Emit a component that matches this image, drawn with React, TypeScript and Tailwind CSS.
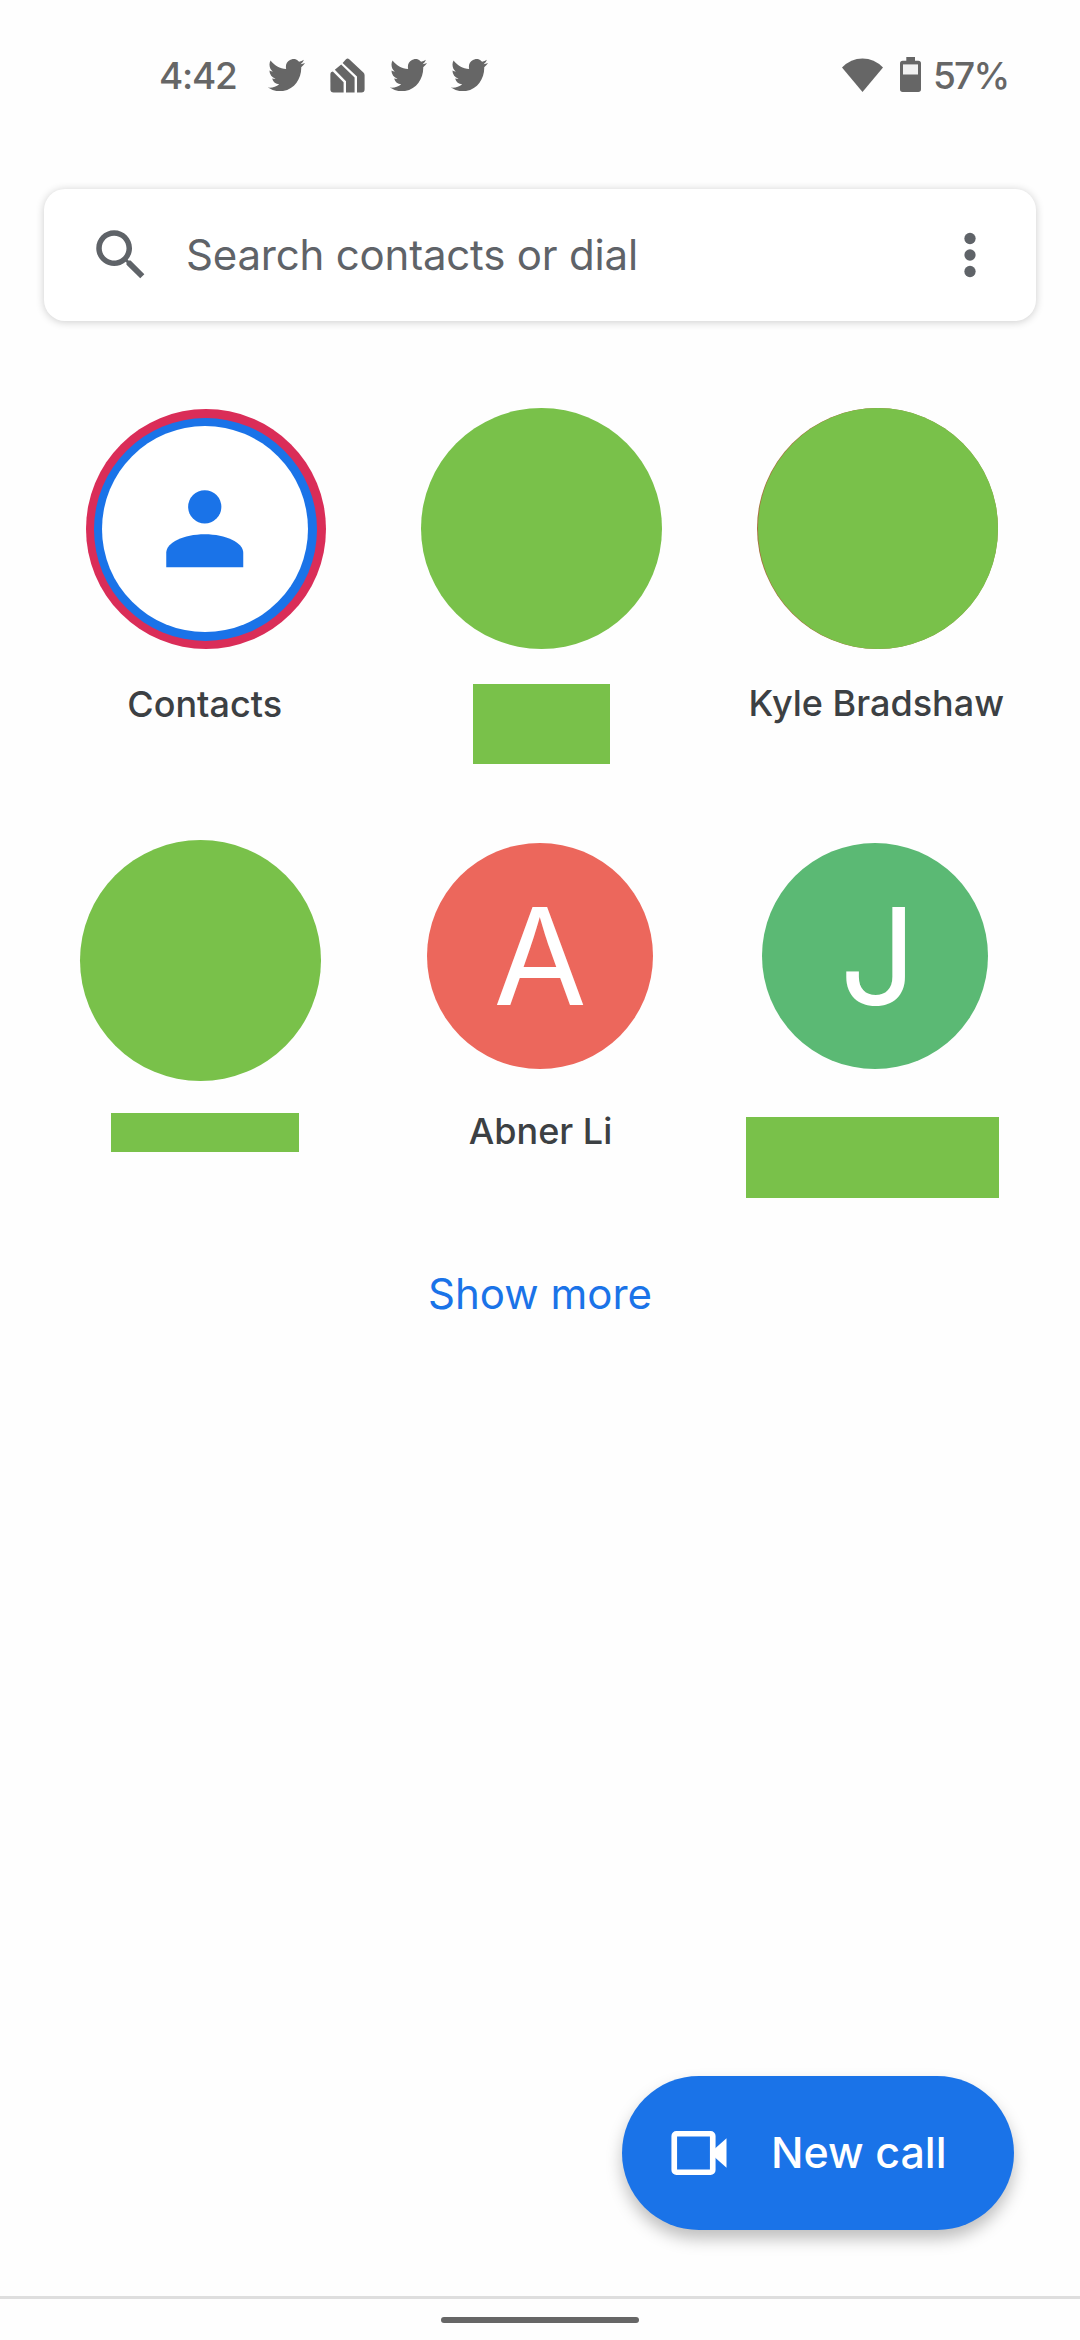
import { ReactNode } from 'react';

interface Contact {
    key: string;
    avatar: ReactNode;
    label: ReactNode;
}

const TwitterIcon = ({ className }: { className?: string }) => (
    <svg viewBox="0 2.2 24 19.4" preserveAspectRatio="none" fill="currentColor" className={`h-8 w-[37px] ${className ?? ''}`}>
        <path d="M23.953 4.57a10 10 0 01-2.825.775 4.958 4.958 0 002.163-2.723c-.951.555-2.005.959-3.127 1.184a4.92 4.92 0 00-8.384 4.482C7.69 8.095 4.067 6.13 1.64 3.162a4.822 4.822 0 00-.666 2.475c0 1.71.87 3.213 2.188 4.096a4.904 4.904 0 01-2.228-.616v.06a4.923 4.923 0 003.946 4.827 4.996 4.996 0 01-2.212.085 4.936 4.936 0 004.604 3.417 9.867 9.867 0 01-6.102 2.105c-.39 0-.779-.023-1.17-.067a13.995 13.995 0 007.557 2.209c9.053 0 13.998-7.496 13.998-13.985 0-.21 0-.42-.015-.63A9.935 9.935 0 0024 4.59z" />
    </svg>
);

const HomeAppIcon = () => (
    <svg viewBox="0 0 35 35" fill="currentColor" className="mt-px ml-[25px] h-[35px] w-[35px]">
        <path d="M0.4 15.8Q0.4 13.6 2.8 13.4L13.6 24.2V34.4H3.6A3.2 3.2 0 0 1 0.4 31.2Z" />
        <path d="M4.8 11.8L11.2 6.4L24.6 19.4V34.4H16V23.3L4.8 11.8Z" />
        <path d="M12.6 5L16 1.2Q17.6 -0.3 19.2 1.2L33.4 14.4Q34.6 15.6 34.6 17.2V31.2A3.2 3.2 0 0 1 31.4 34.4H27V18.5L12.6 5Z" />
    </svg>
);

const StatusBar = () => (
    <div className="flex h-[150px] items-start pt-[57px] text-[#666666]">
        <span className="ml-[159px] w-[109px] text-[37px] leading-[37px] font-medium tracking-[-1.3px]">4:42</span>
        <TwitterIcon className="mt-0.5" />
        <HomeAppIcon />
        <TwitterIcon className="mt-0.5 ml-[25px]" />
        <TwitterIcon className="mt-0.5 ml-6" />
        <div className="ml-auto flex items-start">
            <svg viewBox="0 0 41 34" fill="currentColor" className="mt-px h-[34px] w-[41px]">
                <path d="M20.5 34L0 9.4Q8.8 0.4 20.5 0.4T41 9.4Z" />
            </svg>
            <svg viewBox="0 0 21 35" className="ml-[17px] h-[35px] w-[21px]">
                <path fill="currentColor" d="M6.3 0H15V3.8H18.3Q21 3.8 21 6.5V32.3Q21 35 18.3 35H2.7Q0 35 0 32.3V6.5Q0 3.8 2.7 3.8H6.3Z" />
                <path fill="#f1f1f1" d="M3 7.4H18V17.5H3Z" />
            </svg>
            <span className="mr-[73px] ml-3 w-[74px] text-[37px] leading-[37px] font-medium tracking-[-1.8px]">57%</span>
        </div>
    </div>
);

const SearchBar = () => (
    <div className="mx-11 mt-[39px] flex h-[132px] items-center rounded-[21px] bg-white pr-[33px] pl-11 text-[#5f6368] shadow-[0_1px_9px_rgba(0,0,0,0.2)]">
        <svg viewBox="0 0 24 24" fill="currentColor" className="size-[66px]">
            <path d="M15.5 14h-.79l-.28-.27C15.41 12.59 16 11.11 16 9.5 16 5.91 13.09 3 9.5 3S3 5.91 3 9.5 5.91 16 9.5 16c1.61 0 3.09-.59 4.23-1.57l.27.28v.79l5 4.99L20.49 19l-4.99-5zm-6 0C7.01 14 5 11.99 5 9.5S7.01 5 9.5 5 14 7.01 14 9.5 11.99 14 9.5 14z" />
        </svg>
        <span className="mb-px ml-8 text-[42px] leading-[52px] tracking-[-0.2px]">Search contacts or dial</span>
        <svg viewBox="0 0 24 24" fill="currentColor" className="ml-auto size-[66px]">
            <circle cx="12" cy="6" r="2.05" />
            <circle cx="12" cy="12" r="2.05" />
            <circle cx="12" cy="18" r="2.05" />
        </svg>
    </div>
);

const Name = ({ children }: { children: string }) => (
    <span className="block text-[36px] leading-11 font-medium whitespace-nowrap text-[#3c4043]">{children}</span>
);

const contacts: Contact[] = [
    {
        key: 'contacts',
        avatar: (
            <div className="mt-px ml-[3px] flex size-60 items-center justify-center rounded-full bg-[#da2d58]">
                <div className="mr-px flex size-[223px] items-center justify-center rounded-full bg-[#1a73e8]">
                    <div className="mr-px flex size-[206px] items-center justify-center rounded-full bg-white">
                        <svg viewBox="0 0 24 24" fill="#1a73e8" className="size-[115.5px]">
                            <circle cx="12" cy="7.45" r="3.45" />
                            <path d="M4 20V17C4 14.9 7.6 13.15 12 13.15S20 14.9 20 17V20Z" />
                        </svg>
                    </div>
                </div>
            </div>
        ),
        label: <div className="mt-[33px]"><Name>Contacts</Name></div>,
    },
    {
        key: 'hidden-1',
        avatar: <div className="ml-[3px] size-[241px] rounded-full bg-[#79c14a]" />,
        label: <div className="mt-[35px] ml-[3px] h-20 w-[137px] bg-[#79c14a]" />,
    },
    {
        key: 'kyle',
        avatar: (
            <div className="ml-[5px] size-[241px] rounded-full bg-[#a8703f] pl-px">
                <div className="size-full rounded-full bg-[#79c14a]" />
            </div>
        ),
        label: <div className="mt-8 ml-0.5"><Name>Kyle Bradshaw</Name></div>,
    },
    {
        key: 'hidden-2',
        avatar: <div className="mr-2 size-[241px] rounded-full bg-[#79c14a]" />,
        label: <div className="mt-8 h-[39px] w-[188px] bg-[#79c14a]" />,
    },
    {
        key: 'abner',
        avatar: (
            <div className="mt-[3px] flex size-[226px] items-center justify-center rounded-full bg-[#ec675c] text-[135px] leading-none text-white">A</div>
        ),
        label: <div className="mt-10 ml-px"><Name>Abner Li</Name></div>,
    },
    {
        key: 'j',
        avatar: (
            <div className="mt-[3px] flex size-[226px] items-center justify-center rounded-full bg-[#5bb974] pl-1.5 text-[135px] leading-none text-white">J</div>
        ),
        label: <div className="mt-12 mr-[5px] h-[81px] w-[253px] bg-[#79c14a]" />,
    },
];

const App = () => {
    return (
        <div className="flex h-[2340px] w-[1080px] flex-col bg-[#fefefe] font-[Inter,sans-serif]">
            <StatusBar />
            <SearchBar />

            <div className="mt-[87px] grid grid-cols-3 grid-rows-[432px_400px] px-[37px]">
                {contacts.map(({ key, avatar, label }) => (
                    <div key={key} className="flex flex-col items-center">
                        {avatar}
                        {label}
                    </div>
                ))}
            </div>

            <button className="mt-7 self-center text-[42px] leading-[52px] text-[#1a73e8]">Show more</button>

            <div className="mt-auto flex justify-end pr-[66px] pb-[66px]">
                <button className="flex h-[154px] w-[392px] items-center rounded-full bg-[#1a73e8] pl-11 text-white shadow-[0_9px_16px_rgba(0,0,0,0.25)]">
                    <svg viewBox="0 0 24 24" className="size-[66px]">
                        <rect x="3" y="5" width="14" height="14" rx="0.8" fill="none" stroke="currentColor" strokeWidth="2.05" />
                        <path fill="currentColor" d="M22 6.6V17.4L16 12Z" />
                    </svg>
                    <span className="mb-0.5 ml-[39px] text-[43px] leading-[52px] font-medium">New call</span>
                </button>
            </div>

            <div className="flex h-11 justify-center border-t-[3px] border-[#dedede] pt-[18px]">
                <div className="h-1.5 w-[198px] rounded-full bg-[#666666]" />
            </div>
        </div>
    );
};

export default App;
